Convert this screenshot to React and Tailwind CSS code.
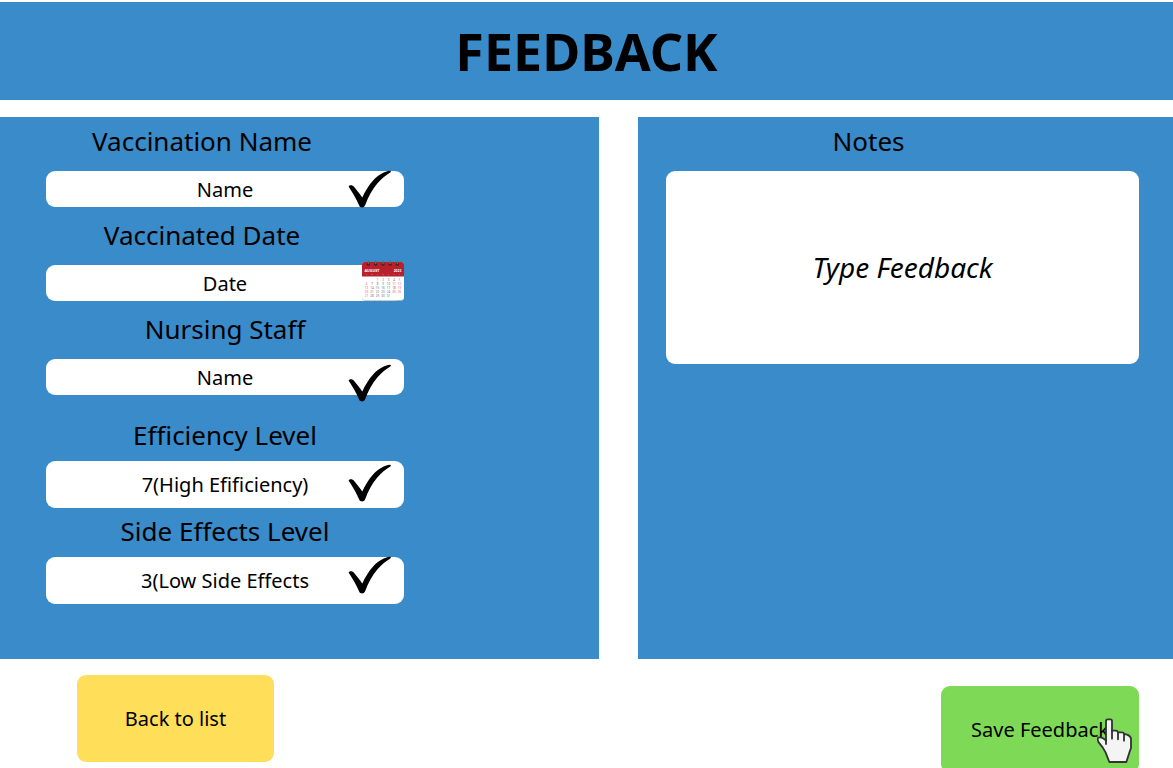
import React from "react";

function CheckMark({ className }) {
  return (
    <svg
      viewBox="0 0 44 38"
      aria-hidden="true"
      className={`pointer-events-none absolute right-3 h-[38px] w-11 ${className}`}
    >
      <path
        d="M0.6 16.4C1.6 14.9 4.4 14.6 6.4 17.2C9.4 21 12 24 14.3 27.6C17 21.5 20.5 15.5 25.3 10.2C30.4 4.9 36.5 1.4 42 0.8C43 0.7 43.1 2 42.3 2.6C37.8 5.4 33.2 9 29.3 13.6C24.2 19.7 20.2 26.8 17 35.6C16 38 12.4 38 11.4 36C8.6 29.4 4.6 22.4 0.6 16.4Z"
        fill="#000"
      />
    </svg>
  );
}

const COLUMNS = [4.5, 10, 15.5, 21, 26.5, 32, 37.5];
const RINGS = [6.4, 13.7, 21, 28.2, 35.4];

function CalendarIcon() {
  const days = Array.from({ length: 31 }, (_, i) => {
    const cell = i + 2;
    return { day: i + 1, col: cell % 7, row: Math.floor(cell / 7) };
  });
  return (
    <svg
      viewBox="0 0 42 41"
      aria-hidden="true"
      className="pointer-events-none absolute -top-[5px] right-0 h-[41px] w-[42px]"
      fontFamily="Noto Sans, sans-serif"
      textAnchor="middle"
    >
      <rect x="0" y="2" width="42" height="38.8" rx="3" fill="#b9bcc0" />
      <rect x="0" y="2" width="42" height="38" rx="3" fill="#fff" />
      <path d="M0 16.6V4.5Q0 2 2.5 2H39.5Q42 2 42 4.5V16.6Z" fill="#b8202c" />
      {RINGS.map((x) => (
        <g key={x}>
          <circle cx={x} cy="4.2" r="1.6" fill="#4a1a1e" />
          <rect x={x - 0.8} y="0.6" width="1.6" height="3.8" rx="0.8" fill="#666" />
        </g>
      ))}
      <text x="10" y="11.6" fontSize="3.7" fontWeight="700" fill="#fff">AUGUST</text>
      <text x="35.5" y="11.6" fontSize="3.3" fontWeight="700" fill="#fff">2023</text>
      {["S", "M", "T", "W", "T", "F", "S"].map((d, i) => (
        <text key={i} x={COLUMNS[i]} y="15.2" fontSize="2" fill="#e59aa0">{d}</text>
      ))}
      {days.map(({ day, col, row }) => (
        <text
          key={day}
          x={COLUMNS[col]}
          y={21 + row * 3.9}
          fontSize="2.9"
          fill={col === 0 || col === 6 ? "#f0596c" : "#66686e"}
        >
          {day}
        </text>
      ))}
    </svg>
  );
}

function HandPointer() {
  return (
    <svg
      viewBox="0 0 105 135"
      aria-hidden="true"
      className="pointer-events-none absolute right-[7px] top-8 h-[45px] w-[35px]"
    >
      <path
        d="M27 68V9Q27 4 32 4H40Q45 4 45 9V38H56Q62 38 63 43H75Q80 43 82 48L90 50Q101 54 102 62V90L97 104L88 132H37L26 104L17 88L5 73Q0 63 4 59Q11 56 20 62Z"
        fill="#f4f4f4"
        stroke="#333"
        strokeWidth="5.5"
        strokeLinejoin="round"
      />
      <path
        d="M27 64V78M45 36V62M63 43V64M81 48V68"
        fill="none"
        stroke="#333"
        strokeWidth="5.5"
        strokeLinecap="round"
      />
    </svg>
  );
}

function Field({ id, label, value, labelClass, inputClass, children }) {
  return (
    <div>
      <label htmlFor={id} className={`block text-center text-[26px] leading-[34px] ${labelClass}`}>
        {label}
      </label>
      <div className="relative">
        <input
          id={id}
          type="text"
          defaultValue={value}
          className={`block w-full rounded-[9px] bg-white text-center text-xl outline-none ${inputClass}`}
        />
        {children}
      </div>
    </div>
  );
}

export default function App() {
  return (
    <div className="min-h-screen bg-white pt-0.5 font-['Noto_Sans',sans-serif] text-black">
      <header className="bg-[#398bca] py-[15px]">
        <h1 className="text-center text-[52px] font-bold leading-[68px]">FEEDBACK</h1>
      </header>

      <main>
        <form>
          <div className="mt-[17px] grid grid-cols-[599fr_535fr] gap-x-[39px]">
            <section className="bg-[#398bca] pb-[55px] pl-[46px] pr-6 pt-[7px]">
              <div className="max-w-[358px]">
                <div className="space-y-[11px]">
                  <Field id="vaccine" label="Vaccination Name" value="Name" labelClass="mb-[13px] pr-[46px]" inputClass="h-9">
                    <CheckMark className="-top-px" />
                  </Field>
                  <Field id="date" label="Vaccinated Date" value="Date" labelClass="mb-[13px] pr-[46px]" inputClass="h-9">
                    <CalendarIcon />
                  </Field>
                  <Field id="staff" label="Nursing Staff" value="Name" labelClass="mb-[13px]" inputClass="h-9">
                    <CheckMark className="top-[5px]" />
                  </Field>
                </div>
                <div className="mt-[23px] space-y-[6px]">
                  <Field id="efficiency" label="Efficiency Level" value="7(High Efificiency)" labelClass="mb-[9px]" inputClass="h-[47px]">
                    <CheckMark className="top-[3px]" />
                  </Field>
                  <Field id="effects" label="Side Effects Level" value="3(Low Side Effects" labelClass="mb-[9px]" inputClass="h-[47px]">
                    <CheckMark className="-top-px" />
                  </Field>
                </div>
              </div>
            </section>

            <section className="bg-[#398bca] pl-7 pr-[34px] pt-[7px]">
              <label htmlFor="notes" className="mb-[13px] block pr-[68px] text-center text-[26px] leading-[34px]">
                Notes
              </label>
              <textarea
                id="notes"
                placeholder="Type Feedback"
                className="block h-[193px] w-full resize-none rounded-[9px] bg-white px-4 pt-[78px] text-center text-[28px] italic leading-9 outline-none placeholder:text-black placeholder:opacity-100"
              />
            </section>
          </div>

          <div className="flex items-start justify-between pl-[77px] pr-[34px] pt-4">
            <button type="button" className="h-[87px] w-[197px] rounded-[9px] bg-[#ffde59] text-xl">
              Back to list
            </button>
            <button type="submit" className="relative mt-[11px] h-[87px] w-[198px] rounded-[9px] bg-[#7ed957] text-xl">
              Save Feedback
              <HandPointer />
            </button>
          </div>
        </form>
      </main>
    </div>
  );
}
